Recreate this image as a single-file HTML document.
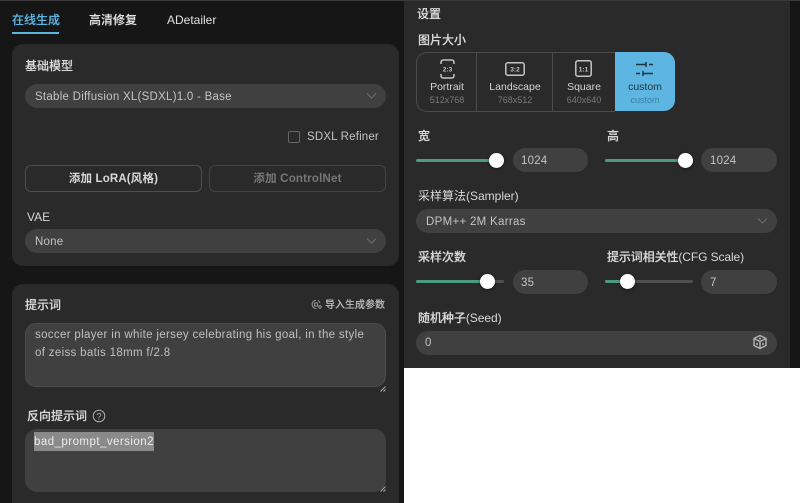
<!DOCTYPE html>
<html><head><meta charset="utf-8">
<style>
html,body{margin:0;padding:0;background:#161616;}
#r{position:relative;width:800px;height:503px;overflow:hidden;background:#161616;font-family:"Liberation Sans","Noto Sans CJK SC",sans-serif;color:#d4d4d4;font-size:12px;filter:blur(.25px);}
#r div,#r svg,#r span.a{position:absolute;}
.t{white-space:nowrap;line-height:16px;}
.card{background:#2a2a2a;border-radius:11px;}
.inp{background:#404040;border-radius:12px;}
.lb{font-size:12px;color:#d8d8d8;}
.m{font-weight:500;text-shadow:0 0 .4px #d8d8d8;}
.track{height:3px;border-radius:2px;background:#4f4f4f;}
.fill{height:3px;border-radius:2px;background:#4d9a83;}
.th{width:15px;height:15px;border-radius:50%;background:#fff;box-shadow:0 1px 3px rgba(0,0,0,.5);}
.sub{font-size:9px;color:#7a7a7a;text-align:center;}
.nm{font-size:10.5px;color:#d4d4d4;text-align:center;}
.v{font-size:11.5px;color:#c4c4c4;}
</style></head><body>
<div id="r">
<div style="left:0;top:0;width:800px;height:1px;background:#3a3a3a"></div>
<div class="t m" style="left:12px;top:12px;font-size:12px;color:#5db4e0;text-shadow:0 0 .4px #5db4e0">在线生成</div>
<div style="left:12px;top:32px;width:47px;height:2px;background:#5db4e0"></div>
<div class="t m" style="left:89px;top:12px;font-size:12px;color:#e0e0e0">高清修复</div>
<div class="t" style="left:167px;top:12px;font-size:12px;color:#e0e0e0">ADetailer</div>

<div class="card" style="left:12px;top:44px;width:387px;height:222px"></div>
<div class="t lb m" style="left:25px;top:58px">基础模型</div>
<div class="inp" style="left:25px;top:84px;width:361px;height:24px"></div>
<div class="t v" style="left:35px;top:89px;letter-spacing:.26px">Stable Diffusion XL(SDXL)1.0 - Base</div>
<svg style="left:366px;top:92px" width="11" height="8" viewBox="0 0 11 8"><path d="M1 1.5L5.5 6L10 1.5" fill="none" stroke="#6e6e6e" stroke-width="1"/></svg>
<div style="left:288px;top:131px;width:10px;height:10px;border:1px solid #666;border-radius:2px"></div>
<div class="t v" style="left:307px;top:129px;letter-spacing:.17px">SDXL Refiner</div>
<div style="left:25px;top:165px;width:175px;height:25px;border:1px solid #4e4e4e;border-radius:6px"></div>
<div class="t" style="left:25px;top:171px;width:177px;text-align:center;font-size:11.5px;font-weight:bold;color:#d8d8d8;letter-spacing:.15px">添加 LoRA(风格)</div>
<div style="left:209px;top:165px;width:175px;height:25px;border:1px solid #424242;border-radius:6px"></div>
<div class="t" style="left:209px;top:171px;width:177px;text-align:center;font-size:11.5px;font-weight:bold;color:#777;letter-spacing:.2px">添加 ControlNet</div>
<div class="t" style="left:27px;top:209px;font-size:12px;color:#d4d4d4">VAE</div>
<div class="inp" style="left:25px;top:229px;width:361px;height:24px"></div>
<div class="t v" style="left:35px;top:234px;letter-spacing:.2px">None</div>
<svg style="left:366px;top:237px" width="11" height="8" viewBox="0 0 11 8"><path d="M1 1.5L5.5 6L10 1.5" fill="none" stroke="#6e6e6e" stroke-width="1"/></svg>

<div class="card" style="left:12px;top:284px;width:387px;height:230px"></div>
<div class="t lb m" style="left:25px;top:297px">提示词</div>
<svg style="left:311px;top:299px" width="11" height="11" viewBox="0 0 11 11"><path d="M5 1.2A4 4 0 1 0 5.5 9.5M7 1.5A4 4 0 0 1 9 4M3.5 4h3v3h-3z" fill="none" stroke="#999" stroke-width="1"/><circle cx="9" cy="8" r="1.2" fill="none" stroke="#999"/></svg>
<div class="t m" style="left:325px;top:298px;font-size:10px;color:#b4b4b4;text-shadow:0 0 .4px #b4b4b4">导入生成参数</div>
<div style="left:25px;top:323px;width:359px;height:62px;background:#404040;border:1px solid #4c4c4c;border-radius:11px"></div>
<div class="t" style="left:35px;top:326px;font-size:11.5px;color:#c0c0c0;line-height:18px;letter-spacing:.33px">soccer player in white jersey celebrating his goal, in the style<br>of zeiss batis 18mm f/2.8</div>
<svg style="left:380px;top:386px" width="6" height="6" viewBox="0 0 6 6"><path d="M0.5 5.5L5.5 .5M3.5 5.5L5.5 3.5" stroke="#aaa" stroke-width="1"/></svg>
<div class="t lb m" style="left:27px;top:408px">反向提示词</div>
<svg style="left:92px;top:409px" width="14" height="14" viewBox="0 0 14 14"><circle cx="7" cy="7" r="5.8" fill="none" stroke="#b0b0b0" stroke-width="1"/><text x="7" y="10.3" text-anchor="middle" font-size="9.5" fill="#b0b0b0" font-family="Liberation Sans">?</text></svg>
<div class="inp" style="left:25px;top:429px;width:361px;height:63px"></div>
<div style="left:34px;top:432px;width:120px;height:19px;background:#8a8a8a"></div>
<div class="t" style="left:34px;top:434px;font-size:11.5px;color:#ececec;letter-spacing:.46px">bad_prompt_version2</div>
<svg style="left:380px;top:486px" width="6" height="6" viewBox="0 0 6 6"><path d="M0.5 5.5L5.5 .5M3.5 5.5L5.5 3.5" stroke="#aaa" stroke-width="1"/></svg>

<div style="left:404px;top:0;width:386px;height:368px;background:#2a2a2a"></div>
<div style="left:404px;top:0;width:396px;height:1px;background:#3a3a3a"></div>
<div style="left:404px;top:368px;width:396px;height:135px;background:#fff"></div>
<div class="t lb m" style="left:417px;top:6px">设置</div>
<div class="t lb m" style="left:418px;top:32px">图片大小</div>

<div style="left:416px;top:52px;width:198px;height:58px;border:1px solid #4c4c4c;border-right:none;border-radius:11px 0 0 11px"></div>
<div style="left:476px;top:53px;width:1px;height:58px;background:#4c4c4c"></div>
<div style="left:552px;top:53px;width:1px;height:58px;background:#4c4c4c"></div>
<div style="left:615px;top:52px;width:60px;height:59px;background:#5db5e2;border-radius:0 11px 11px 0"></div>

<svg style="left:440px;top:59px" width="15" height="20" viewBox="0 0 15 20"><path d="M1 5V3.5Q1 1 3.5 1H11.5Q14 1 14 3.5V5M1 15V16.5Q1 19 3.5 19H11.5Q14 19 14 16.5V15" fill="none" stroke="#c4c4c4" stroke-width="1.5"/><text x="7.5" y="12.5" text-anchor="middle" font-size="6.5" font-weight="bold" fill="#c4c4c4" font-family="Liberation Sans">2:3</text></svg>
<svg style="left:505px;top:62px" width="20" height="14" viewBox="0 0 20 14"><rect x=".8" y=".8" width="18.4" height="12.4" rx="2" fill="none" stroke="#c4c4c4" stroke-width="1.5"/><text x="10" y="9.5" text-anchor="middle" font-size="6.5" font-weight="bold" fill="#c4c4c4" font-family="Liberation Sans">3:2</text></svg>
<svg style="left:575px;top:60px" width="18" height="18" viewBox="0 0 18 18"><rect x=".8" y=".8" width="15.4" height="15.4" rx="2" fill="none" stroke="#c4c4c4" stroke-width="1.5"/><text x="8.5" y="11.5" text-anchor="middle" font-size="6.5" font-weight="bold" fill="#c4c4c4" font-family="Liberation Sans">1:1</text></svg>
<svg style="left:635px;top:61px" width="20" height="16" viewBox="0 0 20 16"><path d="M1 3.5H11M11 1V6M14 3.5H18M1 12.5H5M8 10V15M8 12.5H18" fill="none" stroke="#1d3542" stroke-width="1.5"/></svg>

<div class="t nm" style="left:417px;top:79px;width:60px">Portrait</div>
<div class="t sub" style="left:417px;top:92px;width:60px">512x768</div>
<div class="t nm" style="left:477px;top:79px;width:76px">Landscape</div>
<div class="t sub" style="left:477px;top:92px;width:76px">768x512</div>
<div class="t nm" style="left:553px;top:79px;width:62px">Square</div>
<div class="t sub" style="left:553px;top:92px;width:62px">640x640</div>
<div class="t nm" style="left:615px;top:79px;width:60px;color:#1d3542">custom</div>
<div class="t sub" style="left:615px;top:92px;width:60px;color:#3f7f9f">custom</div>

<div class="t lb m" style="left:418px;top:128px">宽</div>
<div class="fill" style="left:416px;top:159px;width:80px"></div>
<div class="th" style="left:489px;top:153px"></div>
<div class="inp" style="left:513px;top:148px;width:75px;height:24px"></div>
<div class="t v" style="left:521px;top:153px;letter-spacing:.2px">1024</div>
<div class="t lb m" style="left:607px;top:128px">高</div>
<div class="fill" style="left:605px;top:159px;width:80px"></div>
<div class="th" style="left:678px;top:153px"></div>
<div class="inp" style="left:701px;top:148px;width:76px;height:24px"></div>
<div class="t v" style="left:710px;top:153px;letter-spacing:.2px">1024</div>

<div class="t lb" style="left:418px;top:188px">采样算法(Sampler)</div>
<div class="inp" style="left:416px;top:209px;width:361px;height:24px"></div>
<div class="t v" style="left:426px;top:214px;letter-spacing:.3px">DPM++ 2M Karras</div>
<svg style="left:757px;top:217px" width="11" height="8" viewBox="0 0 11 8"><path d="M1 1.5L5.5 6L10 1.5" fill="none" stroke="#6e6e6e" stroke-width="1"/></svg>

<div class="t lb m" style="left:418px;top:249px">采样次数</div>
<div class="track" style="left:416px;top:280px;width:88px"></div>
<div class="fill" style="left:416px;top:280px;width:72px"></div>
<div class="th" style="left:480px;top:274px"></div>
<div class="inp" style="left:513px;top:270px;width:75px;height:24px"></div>
<div class="t v" style="left:521px;top:275px;letter-spacing:.2px">35</div>
<div class="t lb" style="left:607px;top:249px;letter-spacing:-.1px"><span class="m">提示词相关性</span>(CFG Scale)</div>
<div class="track" style="left:605px;top:280px;width:88px"></div>
<div class="fill" style="left:605px;top:280px;width:22px"></div>
<div class="th" style="left:620px;top:274px"></div>
<div class="inp" style="left:701px;top:270px;width:76px;height:24px"></div>
<div class="t v" style="left:710px;top:275px">7</div>

<div class="t lb" style="left:418px;top:310px;letter-spacing:-.05px"><span class="m">随机种子</span>(Seed)</div>
<div class="inp" style="left:416px;top:331px;width:361px;height:24px"></div>
<div class="t v" style="left:425px;top:335px">0</div>
<svg style="left:752px;top:334px" width="16" height="16" viewBox="0 0 16 16"><path d="M8 1.5L14 4.5V11.5L8 14.5L2 11.5V4.5ZM2 4.5L8 7.5L14 4.5M8 7.5V14.5" fill="none" stroke="#b4b4b4" stroke-width="1.4" stroke-linejoin="round"/><circle cx="8" cy="4.5" r="1" fill="#b4b4b4"/><circle cx="5" cy="10" r="1" fill="#b4b4b4"/><circle cx="11" cy="10" r="1" fill="#b4b4b4"/></svg>
</div>
</body></html>
